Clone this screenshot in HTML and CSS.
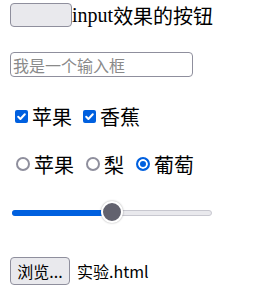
FILE: index.html
```html
<!DOCTYPE html>
<html lang="zh">
<head>
<meta charset="utf-8">
<link rel="stylesheet" href="styles.css">
</head>
<body>
<div class="page">
  <div class="row row-btn">
    <button class="btn-empty" type="button"></button><span class="serif">input</span><span class="cjk">效果的按钮</span>
  </div>
  <div class="row row-input">
    <input class="text-input" type="text" placeholder="我是一个输入框">
  </div>
  <div class="row row-check">
    <label class="opt"><span class="checkbox"><svg viewBox="0 0 13 13" width="13" height="13"><path d="M3.2 6.8 L5.4 9 L9.8 4.2" fill="none" stroke="#fff" stroke-width="2" stroke-linecap="round" stroke-linejoin="round"/></svg></span><span class="lbl">苹果</span></label>
    <label class="opt"><span class="checkbox"><svg viewBox="0 0 13 13" width="13" height="13"><path d="M3.2 6.8 L5.4 9 L9.8 4.2" fill="none" stroke="#fff" stroke-width="2" stroke-linecap="round" stroke-linejoin="round"/></svg></span><span class="lbl">香蕉</span></label>
  </div>
  <div class="row row-radio">
    <label class="opt"><span class="radio"></span><span class="lbl">苹果</span></label>
    <label class="opt"><span class="radio"></span><span class="lbl">梨</span></label>
    <label class="opt"><span class="radio checked"></span><span class="lbl">葡萄</span></label>
  </div>
  <div class="row row-range">
    <div class="track">
      <div class="fill"></div>
      <div class="thumb"></div>
    </div>
  </div>
  <div class="row row-file">
    <button class="btn-file" type="button">浏览...</button><span class="filename">实验.html</span>
  </div>
</div>
</body>
</html>
```

FILE: styles.css
```css
html, body {
  margin: 0;
  padding: 0;
  background: #fff;
}
.page {
  padding: 3px 0 0 10px;
  display: flex;
  flex-direction: column;
  font-family: "Liberation Serif", "Noto Sans CJK SC", serif;
  font-size: 20px;
  color: #000;
}
.row {
  display: flex;
  align-items: center;
}
.row-btn { height: 24px; }
.row-input { height: 25px; margin-top: 25px; }
.row-check { height: 24px; margin-top: 27px; padding-left: 5px; }
.row-radio { height: 24px; margin-top: 24px; padding-left: 5px; }
.row-range { height: 24px; margin-top: 25px; padding-left: 2px; }
.row-file { height: 28px; margin-top: 32px; }

.btn-empty {
  width: 62px;
  height: 24px;
  padding: 0;
  margin: 0;
  background: #e9e9ed;
  border: 1px solid #8f8f9d;
  border-radius: 4px;
  box-sizing: border-box;
}
.serif { font-family: "Liberation Serif", serif; }
.cjk { font-family: "Noto Sans CJK SC", sans-serif; }

.text-input {
  width: 183px;
  height: 25px;
  box-sizing: border-box;
  margin: 0;
  padding: 0 2px;
  border: 1px solid #8f8f9d;
  border-radius: 4px;
  font-family: "Noto Sans CJK SC", sans-serif;
  font-size: 16px;
  outline: none;
}
.text-input::placeholder { color: #8a8a8a; }

.opt {
  display: flex;
  align-items: center;
  margin-right: 11px;
}
.lbl {
  font-family: "Noto Sans CJK SC", sans-serif;
  font-size: 20px;
  margin-left: 4px;
}
.checkbox {
  width: 13px;
  height: 13px;
  background: #0060df;
  border-radius: 2px;
  display: flex;
}
.radio {
  width: 14px;
  height: 14px;
  box-sizing: border-box;
  border: 2px solid #8f8f9d;
  border-radius: 50%;
  margin-left: 1px;
}
.radio.checked {
  border-color: #0060df;
  background: #0060df;
  box-shadow: inset 0 0 0 2px #fff;
}

.track {
  position: relative;
  width: 200px;
  height: 6px;
  border-radius: 3px;
  background: #e9e9ed;
  border: 1px solid #c8c8d0;
  box-sizing: border-box;
}
.fill {
  width: 100px;
  height: 6px;
  margin-top: -1px;
  margin-left: -1px;
  border-radius: 3px;
  background: #0060df;
}
.thumb {
  position: absolute;
  left: 88px;
  top: -10px;
  width: 22px;
  height: 22px;
  box-sizing: border-box;
  border-radius: 50%;
  background: #62626e;
  border: 2px solid #fff;
  box-shadow: 0 0 2px rgba(0,0,0,0.35);
}

.btn-file {
  height: 28px;
  width: 60px;
  margin: 0;
  padding: 0;
  background: #e9e9ed;
  border: 1px solid #8f8f9d;
  border-radius: 4px;
  box-sizing: border-box;
  font-family: "Noto Sans CJK SC", sans-serif;
  font-size: 16px;
  color: #000;
}
.filename {
  margin-left: 7px;
  font-family: "Noto Sans CJK SC", sans-serif;
  font-size: 16px;
}
```
